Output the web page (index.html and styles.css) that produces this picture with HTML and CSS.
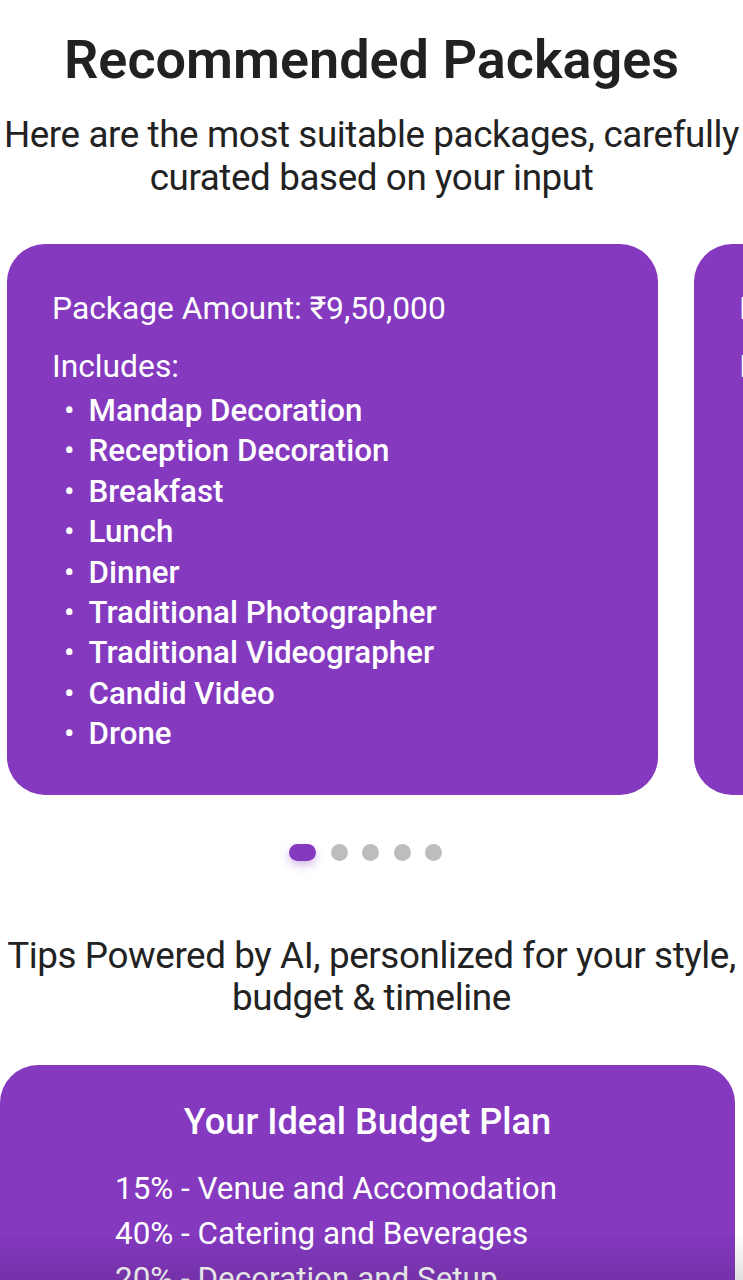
FILE: index.html
```html
<!DOCTYPE html>
<html lang="en">
<head>
    <meta charset="UTF-8">
    <meta name="viewport" content="width=device-width, initial-scale=1.0">
    <title>Recommended Packages</title>
    <link rel="stylesheet" href="styles.css">
</head>
<body>
    <div class="page">
        <h1 class="title">Recommended Packages</h1>
        <p class="subtitle">Here are the most suitable packages, carefully<br>curated based on your input</p>

        <div class="carousel">
            <div class="package-card">
                <h3>Package Amount: ₹9,50,000</h3>
                <h4>Includes:</h4>
                <ul>
                    <li>Mandap Decoration</li>
                    <li>Reception Decoration</li>
                    <li>Breakfast</li>
                    <li>Lunch</li>
                    <li>Dinner</li>
                    <li>Traditional Photographer</li>
                    <li>Traditional Videographer</li>
                    <li>Candid Video</li>
                    <li>Drone</li>
                </ul>
            </div>
            <div class="package-card">
                <h3>Package Amount: ₹8,75,000</h3>
                <h4>Includes:</h4>
            </div>
        </div>

        <div class="dots">
            <span class="dot active"></span>
            <span class="dot"></span>
            <span class="dot"></span>
            <span class="dot"></span>
            <span class="dot"></span>
        </div>

        <p class="tips">Tips Powered by AI, personlized for your style,<br>budget &amp; timeline</p>

        <div class="budget-card">
            <h2>Your Ideal Budget Plan</h2>
            <div class="budget-list">
                <p>15% - Venue and Accomodation</p>
                <p>40% - Catering and Beverages</p>
                <p>20% - Decoration and Setup</p>
                <p>15% - Photography and Video</p>
            </div>
        </div>
    </div>
    <div class="bottom-fade"></div>
</body>
</html>
```

FILE: styles.css
```css
/* Base */
body {
    font-family: 'Roboto', 'Liberation Sans', sans-serif;
    background: #ffffff;
    color: #222222;
    margin: 0;
    overflow: hidden;
}

.page {
    display: flex;
    flex-direction: column;
    align-items: center;
}

.title {
    font-size: 54px;
    font-weight: 600;
    color: #212121;
    margin: 30px 0 0;
    line-height: 60px;
}

.subtitle {
    font-size: 36.8px;
    font-weight: 400;
    line-height: 43px;
    text-align: center;
    margin: 23px 0 0;
    letter-spacing: -0.4px;
}

/* Carousel */
.carousel {
    align-self: stretch;
    display: flex;
    gap: 36px;
    padding-left: 7px;
    margin-top: 45px;
    overflow: hidden;
}

.package-card {
    flex: 0 0 651px;
    height: 551px;
    box-sizing: border-box;
    background: #8439bf;
    border-radius: 38px;
    color: #ffffff;
    padding: 46px 45px 0;
    overflow: hidden;
}

.package-card h3 {
    font-size: 31.8px;
    font-weight: 400;
    margin: 0;
    line-height: 36px;
    white-space: nowrap;
}

.package-card h4 {
    font-size: 31.8px;
    font-weight: 400;
    margin: 22px 0 0;
    line-height: 36px;
}

.package-card ul {
    list-style: none;
    margin: 7px 0 0;
    padding: 0 0 0 12px;
}

.package-card li {
    font-size: 31.3px;
    font-weight: 500;
    line-height: 40.4px;
    display: flex;
    gap: 14px;
}

.package-card li::before {
    content: "•";
    font-weight: 400;
}

/* Dots */
.dots {
    display: flex;
    align-items: center;
    gap: 14.5px;
    margin: 49px 12px 0 0;
}

.dot {
    width: 17px;
    height: 17px;
    border-radius: 50%;
    background: #bdbdbd;
}

.dot.active {
    width: 27px;
    border-radius: 9px;
    background: #8439bf;
    box-shadow: 0 4px 10px rgba(132, 57, 191, 0.35);
}

.tips {
    font-size: 36.8px;
    line-height: 42px;
    text-align: center;
    margin: 74px 0 0;
    letter-spacing: -0.4px;
}

/* Budget card */
.budget-card {
    align-self: stretch;
    margin: 46px 8px 0 0;
    background: #8439bf;
    border-radius: 38px;
    color: #ffffff;
    padding: 35px 0 40px;
    display: flex;
    flex-direction: column;
    align-items: center;
}

.budget-card h2 {
    font-size: 36.2px;
    font-weight: 500;
    margin: 0;
    line-height: 44px;
}

.budget-list {
    margin-top: 22px;
    align-self: flex-start;
    padding-left: 115px;
}

.budget-list p {
    font-size: 31.4px;
    font-weight: 400;
    line-height: 45px;
    margin: 0;
}

.bottom-fade {
    position: fixed;
    left: 0;
    right: 0;
    bottom: 0;
    height: 45px;
    background: linear-gradient(to bottom, rgba(0, 0, 0, 0), rgba(0, 0, 0, 0.12));
}
```
